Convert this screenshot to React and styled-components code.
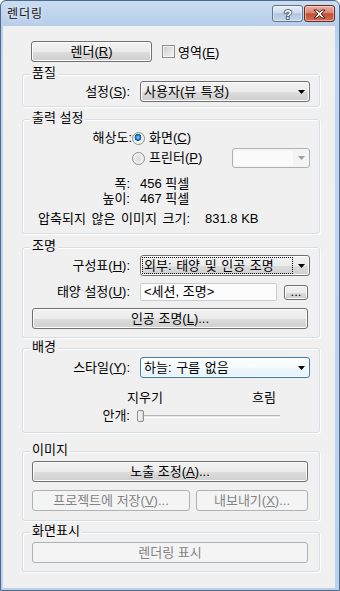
import React from "react";
import styled, { createGlobalStyle } from "styled-components";

const GlobalStyle = createGlobalStyle`
  html, body {
    margin: 0;
    padding: 0;
    background: #ffffff;
  }
  body {
    font-family: "Liberation Sans", "Noto Sans CJK KR", sans-serif;
    font-size: 13px;
    color: #000;
  }
`;

const Window = styled.div`
  width: 340px;
  height: 591px;
  box-sizing: border-box;
  display: flex;
  flex-direction: column;
  border: 1px solid #4e6a8c;
  border-radius: 6px 6px 0 0;
  background: linear-gradient(180deg, #cadcf0 0px, #b8cee9 24px, #c2d6ed 60px, #bcd1ea 100%);
  overflow: hidden;
`;

const TitleBar = styled.div`
  height: 25px;
  box-sizing: border-box;
  display: flex;
  align-items: flex-start;
  padding: 4px 4px 0 6px;
`;

const Title = styled.div`
  flex: 1;
  font-size: 12px;
  line-height: 18px;
  letter-spacing: 1px;
  color: #111;
  text-shadow: 0 0 6px rgba(255, 255, 255, 0.9);
`;

const CapButtons = styled.div`
  display: flex;
  gap: 1px;
`;

const CapButton = styled.div`
  width: 31px;
  height: 17px;
  box-sizing: border-box;
  border: 1px solid ${(p) => (p.$close ? "#6a2a22" : "#62748c")};
  border-radius: 3px;
  background: ${(p) =>
    p.$close
      ? "linear-gradient(180deg, #eab1a5 0%, #d98573 45%, #c44e37 52%, #cf6d55 100%)"
      : "linear-gradient(180deg, #e7eef8 0%, #cddbed 45%, #b1c6e1 52%, #c4d6ec 100%)"};
  box-shadow: inset 0 0 0 1px rgba(255, 255, 255, 0.45);
  display: flex;
  align-items: center;
  justify-content: center;
`;

const Client = styled.div`
  flex: 1;
  margin: 0 4px 2px 2px;
  background: #f0f0f0;
  padding: 15px 15px 0 19px;
  display: flex;
  flex-direction: column;
`;

const TopRow = styled.div`
  display: flex;
  align-items: center;
  margin-left: 9px;
  height: 21px;
`;

const Button = styled.div`
  height: 21px;
  width: ${(p) => (p.$w ? `${p.$w}px` : "auto")};
  margin-right: ${(p) => (p.$mr != null ? p.$mr : 0)}px;
  box-sizing: border-box;
  border: 1px solid ${(p) => (p.$disabled ? "#adb2b5" : "#707070")};
  border-radius: 3px;
  background: ${(p) =>
    p.$disabled
      ? "#f4f4f4"
      : "linear-gradient(180deg, #f2f2f2 0%, #ebebeb 50%, #dddddd 51%, #cfcfcf 100%)"};
  box-shadow: ${(p) => (p.$disabled ? "none" : "inset 0 0 0 1px #fcfcfc")};
  color: ${(p) => (p.$disabled ? "#838383" : "#000")};
  display: flex;
  align-items: center;
  justify-content: center;
  line-height: 19px;
  white-space: nowrap;
`;

const SmallButton = styled(Button)`
  height: 15px;
  width: 24px;
  line-height: 12px;
  align-items: flex-end;
  padding-bottom: 1px;
`;

const Check = styled.div`
  width: 13px;
  height: 13px;
  box-sizing: border-box;
  border: 1px solid #8e8f8f;
  background-image: linear-gradient(135deg, #cbcbcb, #f6f6f6);
  box-shadow: inset 0 0 0 1px #f4f4f4;
  margin-left: 10px;
  margin-right: 3px;
`;

const Group = styled.div`
  position: relative;
  margin-top: ${(p) => p.$mt}px;
  border: 1px solid #d5dfe5;
  border-radius: 3px;
  box-shadow: inset 1px 1px 0 #fff, 1px 1px 0 #fff;
  padding: ${(p) => p.$pt}px 9px ${(p) => p.$pb}px 9px;
  display: flex;
  flex-direction: column;
`;

const Caption = styled.div`
  position: absolute;
  top: -9px;
  left: 7px;
  padding: 0 2px;
  line-height: 14px;
  background: #f0f0f0;
`;

const FormRow = styled.div`
  display: grid;
  grid-template-columns: 98px 1fr;
  column-gap: 10px;
  align-items: center;
  margin-top: ${(p) => p.$mt || 0}px;
`;

const Label = styled.div`
  text-align: right;
  white-space: nowrap;
  line-height: 14px;
`;

const Combo = styled.div`
  height: ${(p) => p.$h || 21}px;
  width: ${(p) => (p.$w ? `${p.$w}px` : "auto")};
  justify-self: ${(p) => (p.$w ? "end" : "stretch")};
  box-sizing: border-box;
  border: 1px solid ${(p) => (p.$disabled ? "#adb2b5" : p.$hot ? "#3c7fb1" : "#707070")};
  border-radius: 3px;
  background: ${(p) =>
    p.$disabled
      ? "#f4f4f4"
      : p.$hot
      ? "linear-gradient(180deg, #fdfeff 0%, #f6fbfe 50%, #eef7fd 51%, #e6f3fc 100%)"
      : "linear-gradient(180deg, #f2f2f2 0%, #ebebeb 50%, #dddddd 51%, #cfcfcf 100%)"};
  box-shadow: inset 0 0 0 1px ${(p) => (p.$disabled ? "#f4f4f4" : "#fcfcfc")};
  color: ${(p) => (p.$disabled ? "#838383" : "#000")};
  display: flex;
  align-items: center;
  padding: 0 4px 0 1px;
  white-space: nowrap;
  word-spacing: 1px;
`;

const ComboText = styled.span`
  flex: 1;
  height: ${(p) => (p.$disabled ? 15 : 17)}px;
  box-sizing: border-box;
  border: 1px dotted ${(p) => (p.$focus ? "#000" : "transparent")};
  padding: 0 1px;
  margin-right: 5px;
  line-height: 15px;
  background: ${(p) => (p.$disabled ? "#fafafa" : "transparent")};
`;

const ResGrid = styled.div`
  display: grid;
  grid-template-columns: 100px auto 1fr;
  grid-template-rows: 20px 20px;
  align-items: center;
`;

const ResLabel = styled(Label)`
  grid-column: 1;
  grid-row: 1;
`;

const RadioItem = styled.div`
  display: flex;
  align-items: center;
  gap: 4px;
  line-height: 14px;
  grid-column: 2;
  grid-row: ${(p) => p.$row};
`;

const Radio = styled.div`
  width: 13px;
  height: 13px;
  box-sizing: border-box;
  border-radius: 50%;
  border: 1px solid #8e8f8f;
  background: ${(p) =>
    p.$on
      ? "radial-gradient(circle at 45% 40%, #a6dcff 0, #3a8fd6 1.6px, #0d4f8f 3.2px, #dfe6ec 3.6px, #f4f4f4 6px)"
      : "radial-gradient(circle at 50% 50%, #d8d8d8 0, #e8e8e8 3px, #f6f6f6 6px)"};
`;

const PrinterCombo = styled(Combo)`
  grid-column: 3;
  grid-row: 2;
`;

const InfoRow = styled.div`
  display: grid;
  grid-template-columns: 98px auto;
  column-gap: 10px;
  line-height: 14px;
  margin-top: ${(p) => p.$mt || 0}px;
`;

const SizeRow = styled.div`
  display: grid;
  grid-template-columns: 167px auto;
  padding-left: 6px;
  line-height: 14px;
  margin-top: ${(p) => p.$mt || 0}px;
`;

const SizeLabel = styled.span`
  word-spacing: 2px;
  white-space: nowrap;
`;

const FieldRow = styled.div`
  display: grid;
  grid-template-columns: 98px 137px auto;
  column-gap: 10px;
  align-items: center;
  margin-top: ${(p) => p.$mt || 0}px;
`;

const Field = styled.div`
  height: 18px;
  box-sizing: border-box;
  border: 1px solid #c9cdd1;
  border-radius: 2px;
  background: #fcfcfc;
  padding: 0 3px;
  line-height: 16px;
`;

const DotsButton = styled(SmallButton)`
  margin-left: -3px;
`;

const WideButton = styled(Button)`
  margin-top: ${(p) => p.$mt || 0}px;
`;

const SliderLabels = styled.div`
  display: grid;
  grid-template-columns: 95px 125px auto;
  line-height: 14px;
  margin-top: ${(p) => p.$mt}px;
`;

const SliderRow = styled.div`
  display: grid;
  grid-template-columns: 98px 143px;
  column-gap: 7px;
  align-items: center;
  height: 14px;
  margin-top: ${(p) => p.$mt}px;
`;

const Track = styled.div`
  position: relative;
  height: 3px;
  border-top: 1px solid #b5b5b5;
  background: #e6e6e6;
  border-bottom: 1px solid #fbfbfb;
  box-sizing: border-box;
`;

const Thumb = styled.div`
  position: absolute;
  left: 0;
  top: -6px;
  width: 7px;
  height: 12px;
  box-sizing: border-box;
  border: 1px solid #8a8a8a;
  border-radius: 2px;
  background: linear-gradient(90deg, #f5f5f5, #dcdcdc);
`;

const ButtonPair = styled.div`
  display: flex;
  gap: 6px;
  margin-top: ${(p) => p.$mt}px;
  margin-right: 2px;
`;

const FlexButton = styled(Button)`
  flex: 1;
`;

const Arrow = ({ color = "#000" }) => (
  <svg width="7" height="4" viewBox="0 0 7 4">
    <path d="M0 0H7L3.5 4Z" fill={color} />
  </svg>
);

const HelpGlyph = () => (
  <svg width="12" height="13" viewBox="0 0 12 13">
    <text
      x="6"
      y="11.5"
      textAnchor="middle"
      fontFamily="Liberation Sans, sans-serif"
      fontWeight="bold"
      fontSize="13"
      fill="#fff"
      stroke="#34485f"
      strokeWidth="1.6"
      paintOrder="stroke"
    >
      ?
    </text>
  </svg>
);

const CloseGlyph = () => (
  <svg width="13" height="10" viewBox="0 0 13 10">
    <path
      d="M1 1H4.2L6.5 3.4L8.8 1H12L8.1 5L12 9H8.8L6.5 6.6L4.2 9H1L4.9 5Z"
      fill="#fff"
      stroke="#4b1c16"
      strokeWidth="1"
      strokeLinejoin="round"
    />
  </svg>
);

export default function App() {
  return (
    <>
      <GlobalStyle />
      <Window>
        <TitleBar>
          <Title>렌더링</Title>
          <CapButtons>
            <CapButton>
              <HelpGlyph />
            </CapButton>
            <CapButton $close>
              <CloseGlyph />
            </CapButton>
          </CapButtons>
        </TitleBar>

        <Client>
          <TopRow>
            <Button $w={121}>
              렌더(<u>R</u>)
            </Button>
            <Check />
            <span>
              영역(<u>E</u>)
            </span>
          </TopRow>

          <Group $mt={12} $pt={6} $pb={4}>
            <Caption>품질</Caption>
            <FormRow>
              <Label>
                설정(<u>S</u>):
              </Label>
              <Combo>
                <ComboText>사용자(뷰 특정)</ComboText>
                <Arrow />
              </Combo>
            </FormRow>
          </Group>

          <Group $mt={12} $pt={8} $pb={7}>
            <Caption>출력 설정</Caption>
            <ResGrid>
              <ResLabel>해상도:</ResLabel>
              <RadioItem $row={1}>
                <Radio $on />
                <span>
                  화면(<u>C</u>)
                </span>
              </RadioItem>
              <RadioItem $row={2}>
                <Radio />
                <span>
                  프린터(<u>P</u>)
                </span>
              </RadioItem>
              <PrinterCombo $disabled $w={78} $h={20}>
                <ComboText $disabled />
                <Arrow color="#a0a0a0" />
              </PrinterCombo>
            </ResGrid>
            <InfoRow $mt={9}>
              <Label>폭:</Label>
              <span>456 픽셀</span>
            </InfoRow>
            <InfoRow $mt={1}>
              <Label>높이:</Label>
              <span>467 픽셀</span>
            </InfoRow>
            <SizeRow $mt={6}>
              <SizeLabel>압축되지 않은 이미지 크기:</SizeLabel>
              <span>831.8 KB</span>
            </SizeRow>
          </Group>

          <Group $mt={13} $pt={7} $pb={8}>
            <Caption>조명</Caption>
            <FormRow>
              <Label>
                구성표(<u>H</u>):
              </Label>
              <Combo>
                <ComboText $focus>외부: 태양 및 인공 조명</ComboText>
                <Arrow />
              </Combo>
            </FormRow>
            <FieldRow $mt={7}>
              <Label>
                태양 설정(<u>U</u>):
              </Label>
              <Field>&lt;세션, 조명&gt;</Field>
              <DotsButton>...</DotsButton>
            </FieldRow>
            <WideButton $mr={2} $mt={7}>
              인공 조명(<u>L</u>)...
            </WideButton>
          </Group>

          <Group $mt={10} $pt={8} $pb={9}>
            <Caption>배경</Caption>
            <FormRow>
              <Label>
                스타일(<u>Y</u>):
              </Label>
              <Combo $hot>
                <ComboText>하늘: 구름 없음</ComboText>
                <Arrow />
              </Combo>
            </FormRow>
            <SliderLabels $mt={13}>
              <span />
              <span>지우기</span>
              <span>흐림</span>
            </SliderLabels>
            <SliderRow $mt={4}>
              <Label>안개:</Label>
              <Track>
                <Thumb />
              </Track>
            </SliderRow>
          </Group>

          <Group $mt={18} $pt={9} $pb={9}>
            <Caption>이미지</Caption>
            <Button $mr={2}>
              노출 조정(<u>A</u>)...
            </Button>
            <ButtonPair $mt={8}>
              <Button $disabled $w={158}>
                프로젝트에 저장(<u>V</u>)...
              </Button>
              <FlexButton $disabled>
                내보내기(<u>X</u>)...
              </FlexButton>
            </ButtonPair>
          </Group>

          <Group $mt={11} $pt={9} $pb={8}>
            <Caption>화면표시</Caption>
            <Button $disabled $mr={2}>
              렌더링 표시
            </Button>
          </Group>
        </Client>
      </Window>
    </>
  );
}
